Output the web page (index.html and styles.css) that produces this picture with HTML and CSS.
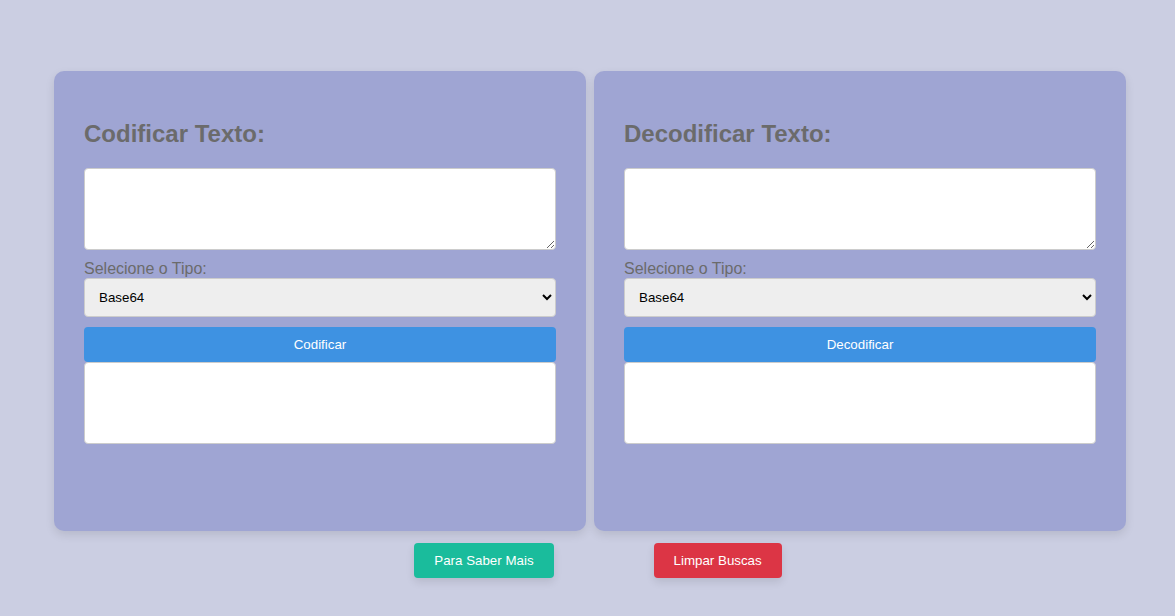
FILE: index.html
```html
<!DOCTYPE html>
<html lang="pt">
<head>
<meta charset="utf-8">
<title>Codificador</title>
<link rel="stylesheet" href="styles.css">
</head>
<body>
<main class="cards">
  <section class="card">
    <h2 class="card-title">Codificar Texto:</h2>
    <textarea class="input-area"></textarea>
    <label class="type-label">Selecione o Tipo:</label>
    <select class="type-select"><option>Base64</option><option>Cifra de César</option></select>
    <button class="action-btn">Codificar</button>
    <div class="output-box"></div>
  </section>
  <section class="card">
    <h2 class="card-title">Decodificar Texto:</h2>
    <textarea class="input-area"></textarea>
    <label class="type-label">Selecione o Tipo:</label>
    <select class="type-select"><option>Base64</option><option>Cifra de César</option></select>
    <button class="action-btn">Decodificar</button>
    <div class="output-box"></div>
  </section>
</main>
<div class="footer-actions">
  <button class="footer-btn more">Para Saber Mais</button>
  <button class="footer-btn clear">Limpar Buscas</button>
</div>
</body>
</html>
```
FILE: styles.css
```css
* { box-sizing: border-box; }
html, body { margin: 0; }
body {
  background: #cbcee2;
  font-family: "Liberation Sans", Arial, sans-serif;
  padding-top: 71px;
  min-height: 616px;
}
.cards {
  display: flex;
  gap: 8px;
  padding-left: 54px;
}
.card {
  width: 532px;
  height: 460px;
  background: #9fa5d3;
  border-radius: 10px;
  padding: 29px 30px;
  box-shadow: 0 4px 10px rgba(0, 0, 0, 0.1);
  display: flex;
  flex-direction: column;
}
.card-title {
  font-size: 24px;
  font-weight: bold;
  color: #6b6b6b;
  margin: 20px 0 20px;
  line-height: 28px;
}
.input-area {
  width: 472px;
  height: 82px;
  border: 1px solid #ccc;
  border-radius: 4px;
  background: #fff;
  resize: vertical;
  margin: 0 0 10px;
  font-family: inherit;
}
.type-label {
  font-size: 16px;
  line-height: 18px;
  color: #6b6b6b;
  display: block;
}
.type-select {
  width: 472px;
  height: 39px;
  background: #eee;
  border: 1px solid #ccc;
  border-radius: 4px;
  padding: 0 10px;
  font-family: inherit;
  font-size: 13.333px;
  color: #000;
}
.action-btn {
  margin-top: 10px;
  width: 472px;
  height: 35px;
  background: #3e92e2;
  color: #fff;
  border: none;
  border-radius: 4px;
  font-family: inherit;
  font-size: 13.333px;
}
.output-box {
  width: 472px;
  height: 82px;
  background: #fff;
  border: 1px solid #ccc;
  border-radius: 4px;
}
.footer-actions {
  display: flex;
  justify-content: center;
  gap: 100px;
  padding-left: 21px;
  margin-top: 12px;
}
.footer-btn {
  height: 35px;
  padding: 0 20px;
  border: none;
  border-radius: 4px;
  color: #fff;
  font-family: inherit;
  font-size: 13.333px;
  white-space: nowrap;
  box-shadow: 0 4px 8px rgba(0, 0, 0, 0.1);
}
.footer-btn.more { background: #1abc9c; }
.footer-btn.clear { background: #dc3545; }
```
